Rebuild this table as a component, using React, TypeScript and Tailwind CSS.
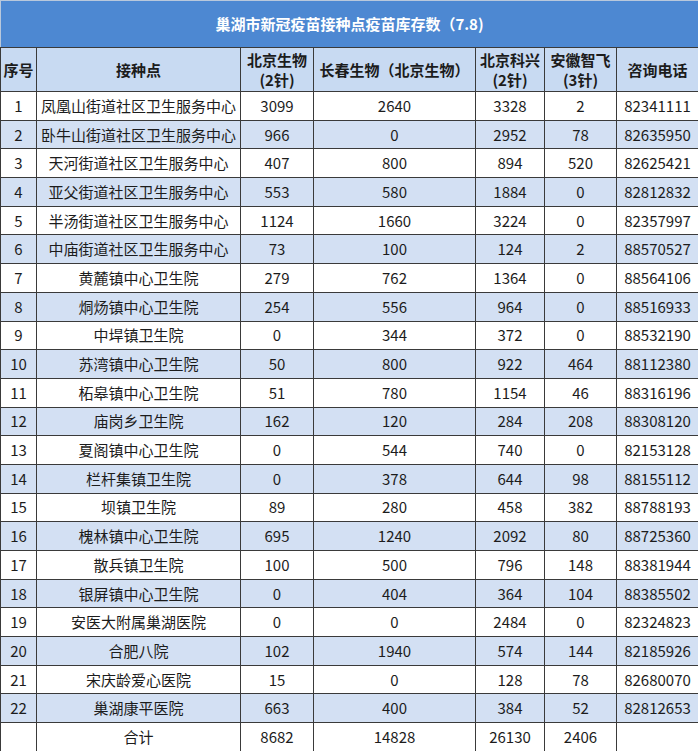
const rows: [number, string, string, string, string, string, string][] = [
  [1, "凤凰山街道社区卫生服务中心", "3099", "2640", "3328", "2", "82341111"],
  [2, "卧牛山街道社区卫生服务中心", "966", "0", "2952", "78", "82635950"],
  [3, "天河街道社区卫生服务中心", "407", "800", "894", "520", "82625421"],
  [4, "亚父街道社区卫生服务中心", "553", "580", "1884", "0", "82812832"],
  [5, "半汤街道社区卫生服务中心", "1124", "1660", "3224", "0", "82357997"],
  [6, "中庙街道社区卫生服务中心", "73", "100", "124", "2", "88570527"],
  [7, "黄麓镇中心卫生院", "279", "762", "1364", "0", "88564106"],
  [8, "烔炀镇中心卫生院", "254", "556", "964", "0", "88516933"],
  [9, "中垾镇卫生院", "0", "344", "372", "0", "88532190"],
  [10, "苏湾镇中心卫生院", "50", "800", "922", "464", "88112380"],
  [11, "柘皋镇中心卫生院", "51", "780", "1154", "46", "88316196"],
  [12, "庙岗乡卫生院", "162", "120", "284", "208", "88308120"],
  [13, "夏阁镇中心卫生院", "0", "544", "740", "0", "82153128"],
  [14, "栏杆集镇卫生院", "0", "378", "644", "98", "88155112"],
  [15, "坝镇卫生院", "89", "280", "458", "382", "88788193"],
  [16, "槐林镇中心卫生院", "695", "1240", "2092", "80", "88725360"],
  [17, "散兵镇卫生院", "100", "500", "796", "148", "88381944"],
  [18, "银屏镇中心卫生院", "0", "404", "364", "104", "88385502"],
  [19, "安医大附属巢湖医院", "0", "0", "2484", "0", "82324823"],
  [20, "合肥八院", "102", "1940", "574", "144", "82185926"],
  [21, "宋庆龄爱心医院", "15", "0", "128", "78", "82680070"],
  [22, "巢湖康平医院", "663", "400", "384", "52", "82812653"],
];

const cell = "border border-[#3a3a3a] text-center p-0 overflow-hidden whitespace-nowrap";

export default function App() {
  return (
    <div
      className="w-[698px] h-[751px] overflow-hidden bg-white text-[#1c1c1c]"
      style={{ fontFamily: '"Noto Sans CJK SC", "Noto Sans", sans-serif' }}
    >
      <div className="h-[47px] bg-[#4d88d2] border-t border-l border-[#b9c8dc] flex items-center justify-center text-white font-bold text-[15px]">
        巢湖市新冠疫苗接种点疫苗库存数（7.8)
      </div>
      <table className="table-fixed border-collapse w-[698px] text-[15px] leading-5">
        <colgroup>
          <col className="w-[36px]" />
          <col className="w-[204px]" />
          <col className="w-[73px]" />
          <col className="w-[162px]" />
          <col className="w-[69px]" />
          <col className="w-[72px]" />
          <col className="w-[82px]" />
        </colgroup>
        <thead>
          <tr className="h-[44px] bg-[#c8daf2] font-bold">
            <th className={cell}>序号</th>
            <th className={cell}>接种点</th>
            <th className={cell}>北京生物<br />(2针)</th>
            <th className={cell}>长春生物（北京生物）</th>
            <th className={cell}>北京科兴<br />(2针)</th>
            <th className={cell}>安徽智飞<br />(3针)</th>
            <th className={cell}>咨询电话</th>
          </tr>
        </thead>
        <tbody>
          {rows.map((r) => (
            <tr key={r[0]} className={r[0] % 2 === 0 ? "h-[28.7px] bg-[#d3e0f3]" : "h-[28.7px] bg-white"}>
              <td className={cell}>{r[0]}</td>
              <td className={cell}>{r[1]}</td>
              <td className={cell}>{r[2]}</td>
              <td className={cell}>{r[3]}</td>
              <td className={cell}>{r[4]}</td>
              <td className={cell}>{r[5]}</td>
              <td className={cell}>{r[6]}</td>
            </tr>
          ))}
          <tr className="h-[28.7px] bg-white">
            <td className={cell}></td>
            <td className={cell}>合计</td>
            <td className={cell}>8682</td>
            <td className={cell}>14828</td>
            <td className={cell}>26130</td>
            <td className={cell}>2406</td>
            <td className={cell}></td>
          </tr>
        </tbody>
      </table>
    </div>
  );
}
